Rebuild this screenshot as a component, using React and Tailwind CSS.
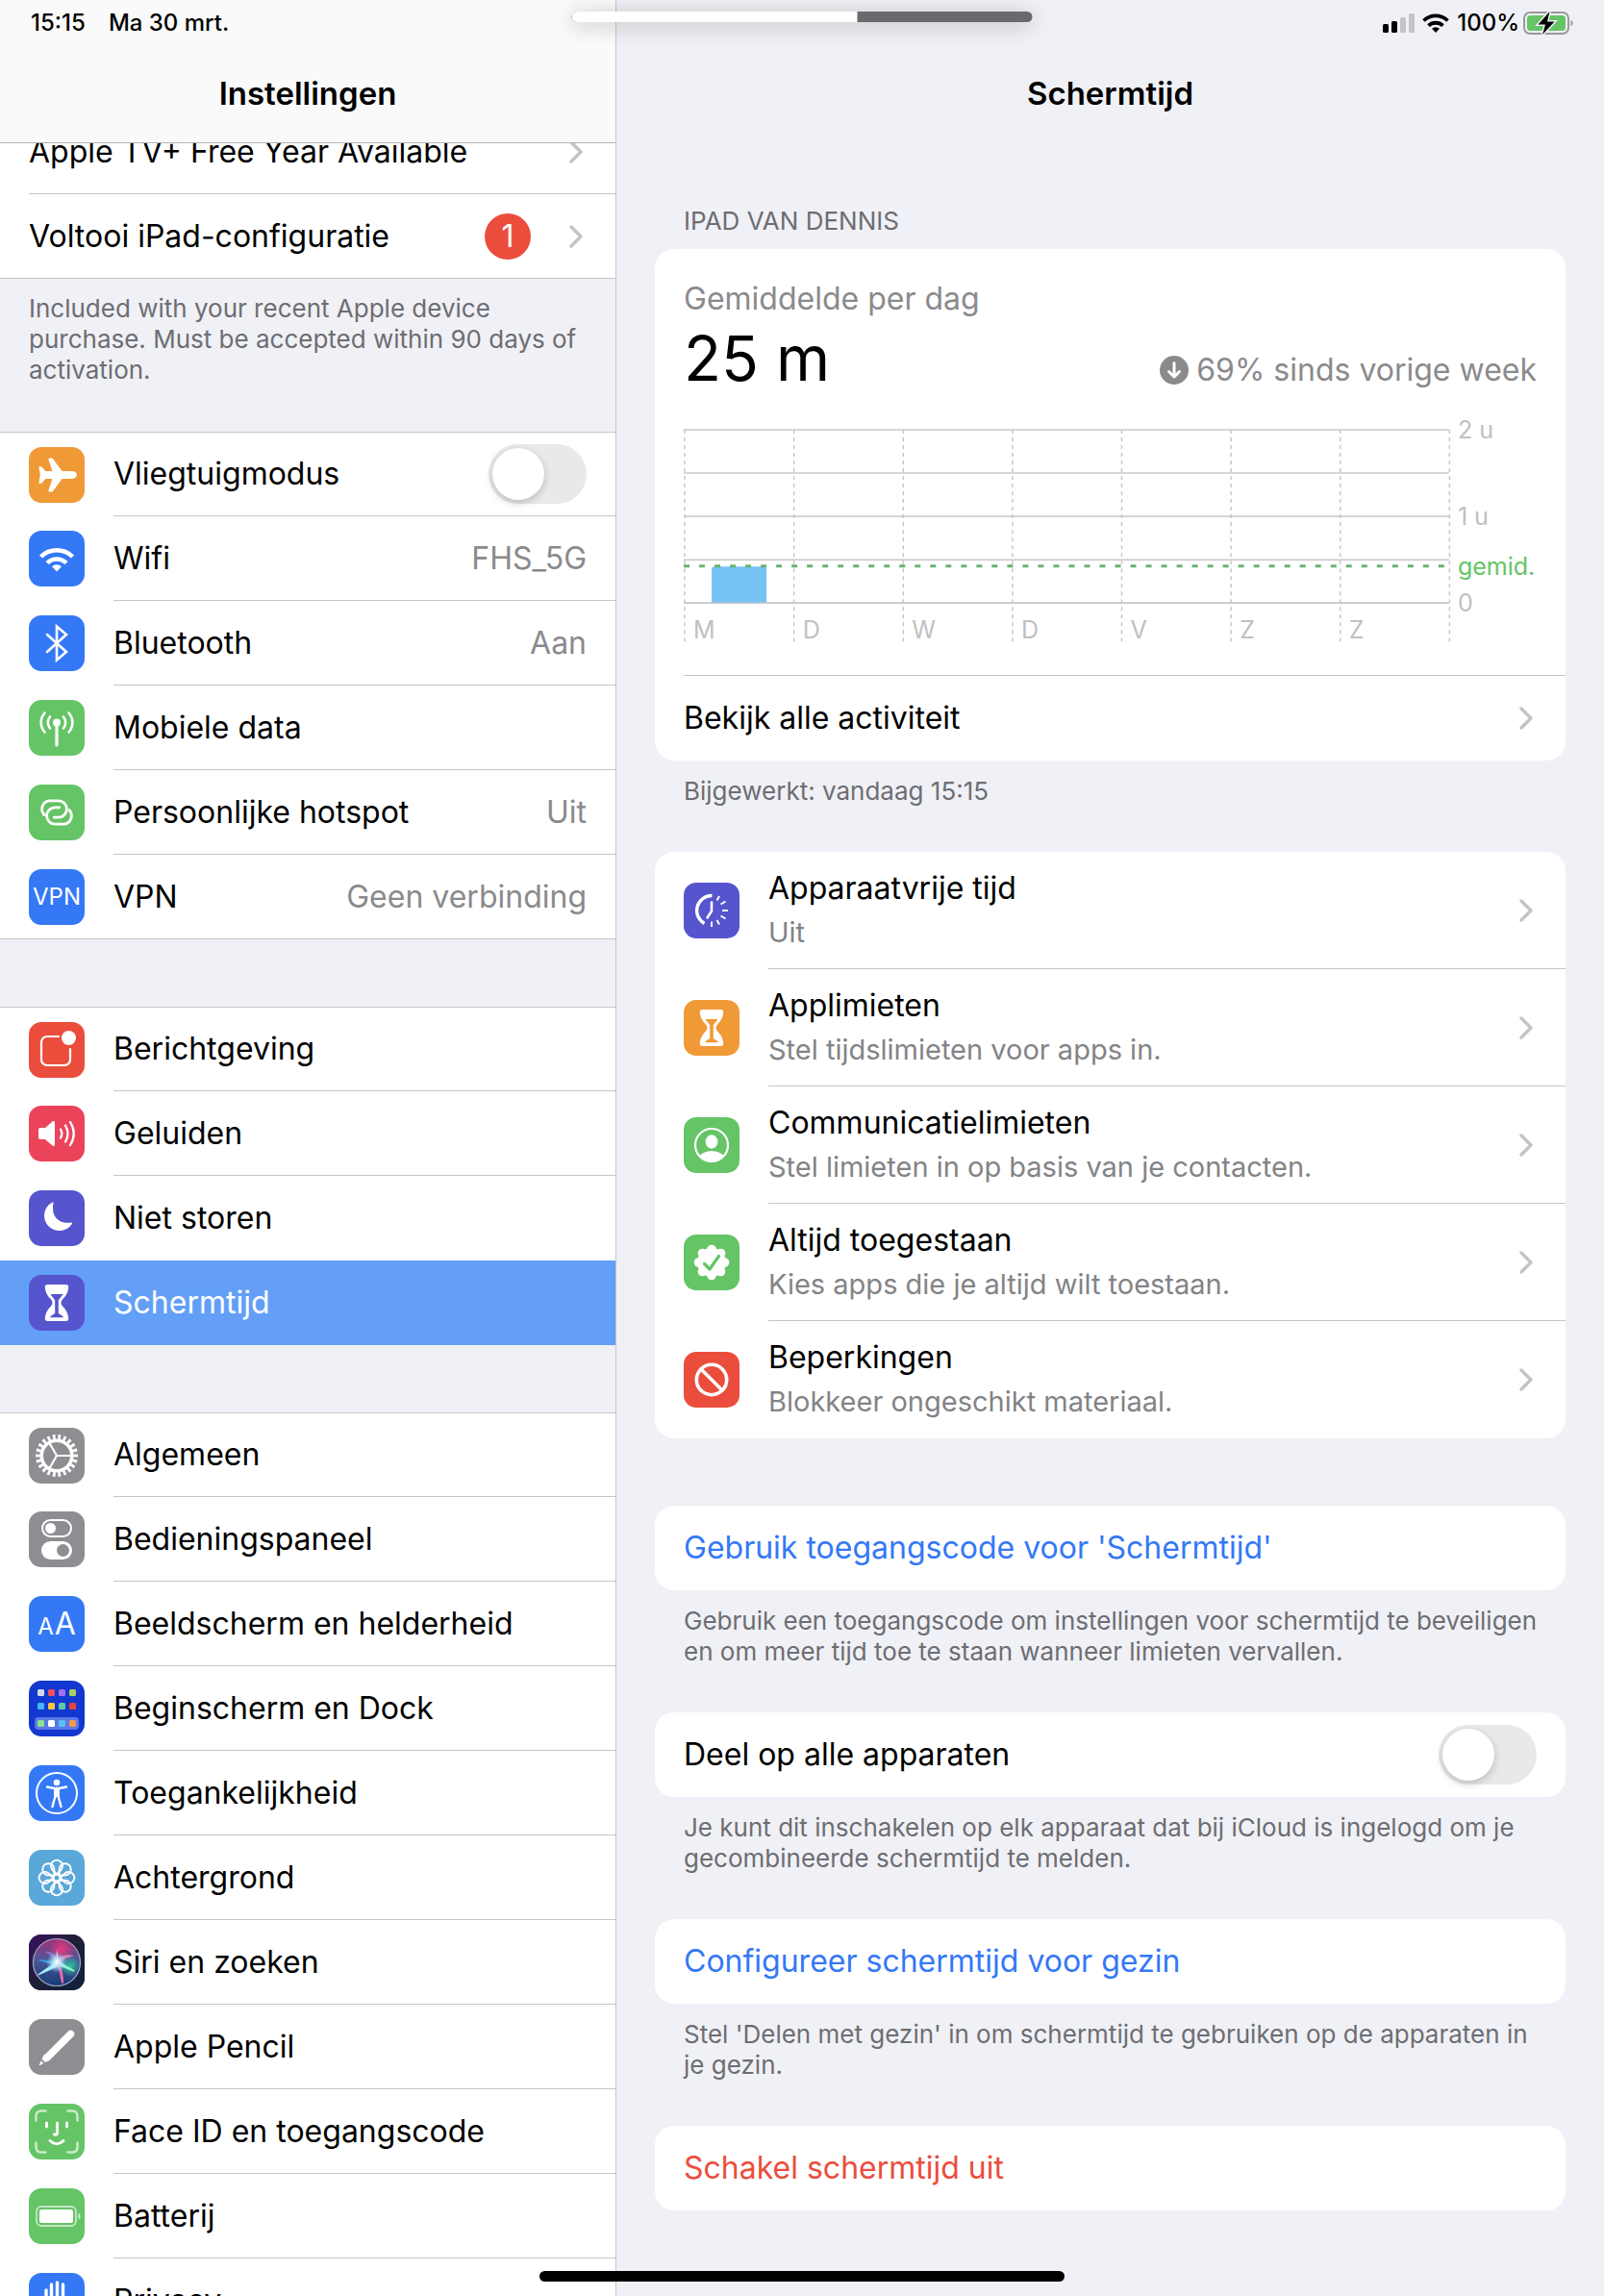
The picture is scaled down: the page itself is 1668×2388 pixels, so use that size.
import { useState } from "react";

const ICON_BG = {
	orange: "bg-[#f09a37]",
	blue: "bg-[#3478f6]",
	green: "bg-[#65c466]",
	red: "bg-[#eb4d3d]",
	pink: "bg-[#eb445a]",
	indigo: "bg-[#5655cd]",
	gray: "bg-[#8e8e92]",
	sky: "bg-[#5aa7da]",
	navy: "bg-[#1238cf]",
	dark: "bg-[#1b1a38]",
};

const Glyph = ({ children }) => (
	<svg
		viewBox="0 0 58 58"
		className="size-[58px]"
		fill="none"
		stroke="white"
		strokeLinecap="round"
		strokeLinejoin="round"
		aria-hidden="true"
	>
		{children}
	</svg>
);

const Hourglass = ({ color }) => (
	<Glyph>
		<path
			d="M19.500 10h19c2 0 3 1 2.700 3c-.6 6.500-3.500 9.500-6.200 12.500c-2 2.300-2 4.700 0 7c2.700 3 5.600 6 6.200 12.500c.3 2-.7 3-2.700 3h-19c-2 0-3-1-2.700-3c.6-6.500 3.500-9.500 6.200-12.500c2-2.300 2-4.700 0-7c-2.700-3-5.600-6-6.200-12.500c-.3-2 .7-3 2.700-3z"
			fill="white"
			stroke="none"
		/>
		<path
			d="M22.500 20h13c-1.300 2.700-3.500 4-4.700 6.500v13.500c2 1.500 4.700 2.200 5.200 4.300h-14c.5-2.100 3.200-2.800 5.200-4.300v-13.500c-1.200-2.500-3.400-3.800-4.700-6.500z"
			fill={color}
			stroke="none"
		/>
	</Glyph>
);

const GLYPHS = {
	airplane: (
		<Glyph>
			<path
				d="M50 29c0 2.400-3 3.900-6 3.900h-9.500l-9 12.300c-.6.900-1.300 1.300-2.300 1.300h-1.800c-.8 0-1.200-.6-.9-1.400l4-12.200h-7.300l-3.300 4c-.5.600-1 .8-1.600.8h-1c-.6 0-1-.4-.8-1l1.300-7.700l-1.300-7.700c-.2-.6.2-1 .8-1h1c.6 0 1.100.2 1.600.8l3.300 4h7.300l-4-12.200c-.3-.8.100-1.400.9-1.400h1.800c1 0 1.700.4 2.300 1.300l9 12.300h9.500c3 0 6 1.500 6 3.900z"
				fill="white"
				stroke="none"
			/>
		</Glyph>
	),
	wifi: (
		<Glyph>
			<g strokeWidth="4.500" strokeLinecap="butt">
				<path d="M12.500 27a23.500 23.500 0 0 1 33 0" />
				<path d="M19 33.500a14.300 14.300 0 0 1 20 0" />
			</g>
			<path
				d="M29 42.500l-5-5.200a7.200 7.200 0 0 1 10 0z"
				fill="white"
				stroke="none"
			/>
		</Glyph>
	),
	bluetooth: (
		<Glyph>
			<path d="M19 20l20 18l-10 8.500v-35l10 8.500l-20 18" strokeWidth="2.600" strokeLinejoin="miter" />
		</Glyph>
	),
	antenna: (
		<Glyph>
			<circle cx="29" cy="23.500" r="4" fill="white" stroke="none" />
			<path d="M29 24v23" strokeWidth="3.200" />
			<g strokeWidth="2.600">
				<path d="M16.500 13.500a15 15 0 0 0 0 20M41.500 13.500a15 15 0 0 1 0 20" />
				<path d="M22 17.500a9.500 9.500 0 0 0 0 12M36 17.500a9.500 9.500 0 0 1 0 12" />
			</g>
		</Glyph>
	),
	hotspot: (
		<Glyph>
			<g strokeWidth="2.800">
				<path d="M16 31.500a8.800 8.800 0 0 1 5.200-14.700h9.500a8.700 8.700 0 0 1 0 17.400h-4.500" />
				<path d="M42 26.500a8.800 8.800 0 0 1-5.200 14.700h-9.500a8.700 8.700 0 0 1 0-17.400h4.500" />
			</g>
		</Glyph>
	),
	vpn: <span className="text-[24px] text-white">VPN</span>,
	notifications: (
		<Glyph>
			<path
				d="M31 15h-12a6 6 0 0 0-6 6v18a6 6 0 0 0 6 6h18a6 6 0 0 0 6-6v-11"
				strokeWidth="2.200"
			/>
			<circle cx="41.500" cy="16.500" r="7.500" fill="white" stroke="none" />
		</Glyph>
	),
	sounds: (
		<Glyph>
			<path
				d="M12 23h5l7.500-6.500c1-.8 2.500-.3 2.500 1v23c0 1.300-1.500 1.800-2.500 1l-7.500-6.500h-5c-1.300 0-2-.7-2-2v-8c0-1.300.7-2 2-2z"
				fill="white"
				stroke="none"
			/>
			<g strokeWidth="2.300">
				<path d="M33 24.500q2.600 4.500 0 9" />
				<path d="M38 20.500q5 8.500 0 17" />
				<path d="M43 17q7.500 12 0 24" />
			</g>
		</Glyph>
	),
	moon: (
		<Glyph>
			<path
				d="M25.500 13c-2.500 14 4.500 22.500 18.800 20.500c.8 0 1 .5.7 1.200a15.700 15.700 0 1 1-20.500-22.300c.7-.3 1.100 0 1 .6z"
				fill="white"
				stroke="none"
			/>
		</Glyph>
	),
	hourglass: <Hourglass color="#5655cd" />,
	hourglassOrange: <Hourglass color="#f09a37" />,
	gear: (
		<Glyph>
			<circle
				cx="29"
				cy="29"
				r="19.500"
				strokeWidth="5"
				strokeLinecap="butt"
				pathLength="44"
				strokeDasharray="1 1"
				strokeDashoffset=".5"
			/>
			<circle cx="29" cy="29" r="15.800" strokeWidth="3.600" />
			<path d="M29 29h15M29 29l-7.500-13M29 29l-7.500 13" strokeWidth="2.200" />
		</Glyph>
	),
	controls: (
		<Glyph>
			<rect x="14" y="9" width="30" height="17" rx="8.500" strokeWidth="2" />
			<circle cx="22.500" cy="17.500" r="5.500" fill="white" stroke="none" />
			<rect x="13" y="31" width="32" height="19" rx="9.500" fill="white" stroke="none" />
			<circle cx="35.500" cy="40.500" r="6.500" fill="#8e8e92" stroke="none" />
		</Glyph>
	),
	textSize: (
		<span className="flex items-baseline gap-px text-white">
			<span className="text-[24px]">A</span>
			<span className="text-[32px]">A</span>
		</span>
	),
	homeScreen: (
		<Glyph>
			<g stroke="none">
				<rect x="6" y="38" width="46" height="13" rx="4" fill="#5b78e6" />
				{[
					["#d5dbe0", "#f04e62", "#a66ff0", "#a9d05a"],
					["#46b5f5", "#fbc23c", "#63c9a0", "#ea4536"],
					["#86e58a", "#ffffff", "#5bc0f3", "#f2994e"],
				].map((row, y) =>
					row.map((fill, x) => (
						<rect
							key={`${y}-${x}`}
							x={9 + x * 11}
							y={[9, 23, 41][y]}
							width="7"
							height="7"
							rx="1.500"
							fill={fill}
						/>
					)),
				)}
			</g>
		</Glyph>
	),
	accessibility: (
		<Glyph>
			<circle cx="29" cy="29" r="21" strokeWidth="2" />
			<circle cx="29" cy="18" r="3.300" fill="white" stroke="none" />
			<path
				d="M19 22.500l7.300 1.500h5.400l7.300-1.500M27.500 24v8l-3 11M30.500 24v8l3 11"
				strokeWidth="2.400"
			/>
			<path d="M26 24h6l-.5 9h-5z" fill="white" stroke="none" />
		</Glyph>
	),
	flower: (
		<Glyph>
			<g strokeWidth="2">
				{[0, 45, 90, 135, 180, 225, 270, 315].map((angle) => (
					<path
						key={angle}
						d="M29 25.500l-5-5.500a6 6 0 1 1 10 0z"
						transform={`rotate(${angle} 29 29)`}
					/>
				))}
				<circle cx="29" cy="29" r="3.500" />
			</g>
		</Glyph>
	),
	siri: (
		<Glyph>
			<defs>
				<linearGradient id="siri-bg" x1="0" y1="0" x2="1" y2="1">
					<stop offset="0" stopColor="#3b1060" />
					<stop offset=".5" stopColor="#1d2036" />
					<stop offset="1" stopColor="#10203f" />
				</linearGradient>
				<linearGradient id="siri-orb" x1=".5" y1="0" x2=".5" y2="1">
					<stop offset="0" stopColor="#a3307a" />
					<stop offset=".45" stopColor="#4a5796" />
					<stop offset="1" stopColor="#173a78" />
				</linearGradient>
				<radialGradient id="siri-pink">
					<stop offset="0" stopColor="#e8397f" />
					<stop offset="1" stopColor="#e8397f" stopOpacity="0" />
				</radialGradient>
				<radialGradient id="siri-green">
					<stop offset="0" stopColor="#2fc79a" />
					<stop offset="1" stopColor="#2fc79a" stopOpacity="0" />
				</radialGradient>
				<radialGradient id="siri-core">
					<stop offset="0" stopColor="#ffffff" />
					<stop offset=".4" stopColor="#bfeaff" stopOpacity=".8" />
					<stop offset="1" stopColor="#7fd0ff" stopOpacity="0" />
				</radialGradient>
			</defs>
			<g stroke="none">
				<rect width="58" height="58" fill="url(#siri-bg)" />
				<circle cx="29" cy="29" r="24.500" fill="url(#siri-orb)" />
				<circle cx="34" cy="16" r="13" fill="url(#siri-pink)" />
				<circle cx="43" cy="33" r="11" fill="url(#siri-green)" />
				<path d="M29 28c-9-1-16-3-20-1c5 1 12 4 20 5z" fill="#3ea8e8" opacity=".8" />
				<path d="M30 26c-3-6-8-9-14-8c6 2 9 6 12 11z" fill="#9a7fe0" opacity=".8" />
				<path d="M28 28c4-6 10-8 20-6c-7 1-13 4-18 9z" fill="#e78fb8" opacity=".8" />
				<path d="M27 29l-17 12c-1 1 0 2 1 1l20-9z" fill="#a9f0ff" />
				<path d="M30 27l17 10c1 .7.500 2-.8 1.600l-18-7z" fill="#8df5cf" />
				<path d="M28 30c4 5 4 12 6 20c.3 1.500 2 1.500 2 0c0-9-2-16-6-22z" fill="#f06ba4" />
				<path d="M28 30l1-15l3 15z" fill="#f4b7dc" />
				<circle cx="29" cy="29" r="11" fill="url(#siri-core)" />
			</g>
			<circle cx="29" cy="29" r="24.500" stroke="#a4aac8" strokeWidth="1.200" />
		</Glyph>
	),
	pencil: (
		<Glyph>
			<path d="M43.500 15.500l-24 24" strokeWidth="7.500" />
			<path d="M16 36.500l6 6l-5 2.500l-3.500-3.500z" fill="white" stroke="none" />
			<path d="M12.500 43.500l3 2.500l-5 2.500z" fill="white" stroke="none" />
		</Glyph>
	),
	faceId: (
		<Glyph>
			<g strokeWidth="2.600" opacity=".65">
				<path d="M7.500 17.500v-5a5 5 0 0 1 5-5h5M40.500 7.500h5a5 5 0 0 1 5 5v5M50.500 40.500v5a5 5 0 0 1-5 5h-5M17.500 50.500h-5a5 5 0 0 1-5-5v-5" />
			</g>
			<g strokeWidth="3">
				<path d="M18.500 20v4M39.500 20v4M29.500 20v10.500q0 1.500-1.500 1.500h-1.500" />
				<path d="M22 38.500q7 6.500 14 0" />
			</g>
		</Glyph>
	),
	battery: (
		<Glyph>
			<rect x="8" y="19" width="41" height="20" rx="5" strokeWidth="1.800" opacity=".6" />
			<rect x="11" y="22" width="35" height="14" rx="2.500" fill="white" stroke="none" />
			<path d="M51.500 25.500q4.500 3.500 0 7z" fill="white" stroke="none" opacity=".7" />
		</Glyph>
	),
	hand: (
		<Glyph>
			<g strokeWidth="3.400">
				<path d="M18 18v20M23.500 12v24M29.500 10v24M35.500 12v24" />
			</g>
			<path d="M16.500 30h21v14h-21z" fill="white" stroke="none" />
		</Glyph>
	),
	downtime: (
		<Glyph>
			<path d="M29.500 13.500a15.500 15.500 0 0 0-8 29" strokeWidth="3.400" strokeLinecap="butt" />
			<path d="M29 20.500v9l-4.500 7" strokeWidth="2.600" />
			<path
				d="M34.500 18.500l2.500-4.500M38.500 22.500l5-3M40 29h6M38.500 34.500l5 3M34.500 39l2.500 4.500M29 40.500v5.500"
				strokeWidth="2"
				strokeLinecap="butt"
			/>
		</Glyph>
	),
	contact: (
		<Glyph>
			<defs>
				<clipPath id="contact-clip">
					<circle cx="29" cy="29" r="17" />
				</clipPath>
			</defs>
			<circle cx="29" cy="29" r="17" strokeWidth="2.200" />
			<ellipse cx="29" cy="25.500" rx="6.400" ry="7.200" fill="white" stroke="none" />
			<ellipse
				cx="29"
				cy="44"
				rx="14"
				ry="9"
				fill="white"
				stroke="none"
				clipPath="url(#contact-clip)"
			/>
		</Glyph>
	),
	allowed: (
		<Glyph>
			<g fill="white" stroke="none">
				<circle cx="29" cy="29" r="15" />
				{[0, 45, 90, 135, 180, 225, 270, 315].map((angle) => (
					<circle
						key={angle}
						cx="29"
						cy="15.500"
						r="4.800"
						transform={`rotate(${angle} 29 29)`}
					/>
				))}
			</g>
			<path d="M21.500 30.500l5.500 5.500l9.500-13.500" stroke="#65c466" strokeWidth="3.200" />
		</Glyph>
	),
	blocked: (
		<Glyph>
			<circle cx="29" cy="29" r="15.700" strokeWidth="3.600" />
			<path d="M18 18l22 22" strokeWidth="3.600" />
		</Glyph>
	),
};

const CONNECTIVITY = [
	{ icon: "airplane", color: "orange", label: "Vliegtuigmodus", toggle: true },
	{ icon: "wifi", color: "blue", label: "Wifi", value: "FHS_5G" },
	{ icon: "bluetooth", color: "blue", label: "Bluetooth", value: "Aan" },
	{ icon: "antenna", color: "green", label: "Mobiele data" },
	{ icon: "hotspot", color: "green", label: "Persoonlijke hotspot", value: "Uit" },
	{ icon: "vpn", color: "blue", label: "VPN", value: "Geen verbinding" },
];

const ATTENTION = [
	{ icon: "notifications", color: "red", label: "Berichtgeving" },
	{ icon: "sounds", color: "pink", label: "Geluiden" },
	{ icon: "moon", color: "indigo", label: "Niet storen", plain: true },
	{ icon: "hourglass", color: "indigo", label: "Schermtijd", active: true },
];

const GENERAL = [
	{ icon: "gear", color: "gray", label: "Algemeen" },
	{ icon: "controls", color: "gray", label: "Bedieningspaneel" },
	{ icon: "textSize", color: "blue", label: "Beeldscherm en helderheid" },
	{ icon: "homeScreen", color: "navy", label: "Beginscherm en Dock" },
	{ icon: "accessibility", color: "blue", label: "Toegankelijkheid" },
	{ icon: "flower", color: "sky", label: "Achtergrond" },
	{ icon: "siri", color: "dark", label: "Siri en zoeken" },
	{ icon: "pencil", color: "gray", label: "Apple Pencil" },
	{ icon: "faceId", color: "green", label: "Face ID en toegangscode" },
	{ icon: "battery", color: "green", label: "Batterij" },
	{ icon: "hand", color: "blue", label: "Privacy" },
];

const LIMITS = [
	{ icon: "downtime", color: "indigo", title: "Apparaatvrije tijd", text: "Uit" },
	{
		icon: "hourglassOrange",
		color: "orange",
		title: "Applimieten",
		text: "Stel tijdslimieten voor apps in.",
	},
	{
		icon: "contact",
		color: "green",
		title: "Communicatielimieten",
		text: "Stel limieten in op basis van je contacten.",
	},
	{
		icon: "allowed",
		color: "green",
		title: "Altijd toegestaan",
		text: "Kies apps die je altijd wilt toestaan.",
	},
	{
		icon: "blocked",
		color: "red",
		title: "Beperkingen",
		text: "Blokkeer ongeschikt materiaal.",
	},
];

const DAYS = ["M", "D", "W", "D", "V", "Z", "Z"];

const AppIcon = ({ name, color }) => (
	<span
		className={`flex size-[58px] shrink-0 items-center justify-center overflow-hidden rounded-[13px] ${ICON_BG[color]}`}
	>
		{GLYPHS[name]}
	</span>
);

const Chevron = () => (
	<svg
		viewBox="0 0 14 24"
		className="h-6 w-3.5 shrink-0"
		fill="none"
		stroke="#c4c4c6"
		strokeWidth="3.500"
		strokeLinecap="round"
		strokeLinejoin="round"
		aria-hidden="true"
	>
		<path d="M2 2l10 10l-10 10" />
	</svg>
);

const Toggle = ({ id }) => {
	const [on, setOn] = useState(false);

	return (
		<input
			id={id}
			type="checkbox"
			role="switch"
			checked={on}
			onChange={() => setOn(!on)}
			className="h-[62px] w-[102px] shrink-0 cursor-pointer appearance-none rounded-full bg-[#e8e9e9] p-1 before:block before:size-[54px] before:rounded-full before:bg-white before:shadow-[0_3px_8px_rgba(0,0,0,0.2)] checked:bg-[#65c466] checked:before:ml-10"
		/>
	);
};

const SidebarRow = ({ icon, color, label, value, toggle, active, plain }) => {
	const Tag = toggle ? "label" : "a";

	return (
		<li
			className={`group last:border-b ${
				active ? "border-[#639ff7]" : "border-[#c6c6c9]"
			}`}
		>
			<Tag
				href={toggle ? undefined : "#"}
				htmlFor={toggle ? icon : undefined}
				aria-current={active ? "page" : undefined}
				className={`flex h-[88px] items-center gap-[30px] pl-[30px] group-first:h-[87px] group-last:h-[87px] ${
					active ? "bg-[#639ff7] text-white" : "bg-white text-black"
				}`}
			>
				<AppIcon name={icon} color={color} />
				<span
					className={`flex h-full flex-1 items-center justify-between border-[#c6c6c9] pr-[30px] group-last:border-b-0 ${
						plain ? "" : "border-b"
					}`}
				>
					<span>{label}</span>
					{value && <span className="text-[#8a8a8d]">{value}</span>}
					{toggle && <Toggle id={icon} />}
				</span>
			</Tag>
		</li>
	);
};

const SidebarGroup = ({ rows }) => (
	<ul className="border-t border-[#c6c6c9] bg-white">
		{rows.map((row) => (
			<SidebarRow key={row.label} {...row} />
		))}
	</ul>
);

const Sidebar = () => (
	<aside className="flex w-[641px] shrink-0 flex-col overflow-hidden border-r border-[#c6c6c9]">
		<header className="z-10 shrink-0 border-b border-[#b2b2b4] bg-[#f9faf9]">
			<div className="flex h-12 items-center gap-6 pl-8 text-[24px] font-medium">
				<time>15:15</time>
				<span>Ma 30 mrt.</span>
			</div>
			<h1 className="flex h-[100px] items-center justify-center text-[33px] font-semibold">
				Instellingen
			</h1>
		</header>

		{/* List is scrolled a little, so the first row sits under the header */}
		<nav className="-mt-9 shrink-0">
			<ul className="border-y border-[#c6c6c9] bg-white">
				<li className="pl-[30px]">
					<a
						href="#"
						className="flex h-[88px] items-center justify-between border-b border-[#c6c6c9] pr-[34px]"
					>
						Apple TV+ Free Year Available
						<Chevron />
					</a>
				</li>
				<li className="pl-[30px]">
					<a href="#" className="flex h-[87px] items-center gap-10 pr-[34px]">
						<span className="flex-1">Voltooi iPad-configuratie</span>
						<span className="flex size-12 items-center justify-center rounded-full bg-[#eb4d3d] text-white">
							1
						</span>
						<Chevron />
					</a>
				</li>
			</ul>
			<p className="px-[30px] pt-[15px] pb-12 text-[26px] leading-8 text-[#6d6d72]">
				Included with your recent Apple device purchase. Must be accepted
				within 90 days of activation.
			</p>
			<div className="flex flex-col gap-[70px]">
				<SidebarGroup rows={CONNECTIVITY} />
				<SidebarGroup rows={ATTENTION} />
				<SidebarGroup rows={GENERAL} />
			</div>
		</nav>
	</aside>
);

const StatusIcons = () => (
	<div className="flex h-12 items-center justify-end gap-2 pr-[30px] text-[24px] font-medium">
		<svg viewBox="0 0 33 20" className="h-5 w-[33px]" aria-label="Signaal">
			<rect x="0" y="11" width="6" height="9" rx="1.500" />
			<rect x="9" y="8" width="6" height="12" rx="1.500" />
			<rect x="18" y="4" width="6" height="16" rx="1.500" fill="#c3c4c8" />
			<rect x="27" y="0" width="6" height="20" rx="1.500" fill="#c3c4c8" />
		</svg>
		<svg
			viewBox="0 0 28 20"
			className="h-5 w-7"
			fill="none"
			stroke="black"
			strokeWidth="3.800"
			aria-label="Wifi"
		>
			<path d="M1.500 7.500a18 18 0 0 1 25 0" />
			<path d="M6.500 12.700a11 11 0 0 1 15 0" />
			<path d="M14 20l-4-4.200a6 6 0 0 1 8 0z" fill="black" stroke="none" />
		</svg>
		<div className="flex items-center gap-1">
			<span>100%</span>
			<svg viewBox="0 0 54 26" className="h-[26px] w-[54px]" aria-label="Batterij">
				<rect x="1" y="2" width="46" height="22" rx="6" fill="#f0f1f6" stroke="#98989d" strokeWidth="2" />
				<rect x="4" y="5" width="40" height="16" rx="3.500" fill="#65c466" />
				<path d="M49.500 9.500q4.500 3.500 0 7z" fill="#98989d" />
				<path
					d="M27.500 1l-12 13.500h7.500l-3 10.500l12.500-13.500h-7.500z"
					stroke="#f0f1f6"
					strokeWidth="3"
					paintOrder="stroke"
				/>
			</svg>
		</div>
	</div>
);

const Card = ({ children }) => (
	<div className="overflow-hidden rounded-[20px] bg-white">{children}</div>
);

const Note = ({ children }) => (
	<p className="pt-4 pr-5 pb-[47px] pl-[30px] text-[26px] leading-8 text-[#6d6d72]">
		{children}
	</p>
);

const UsageChart = () => (
	<svg
		viewBox="0 0 886 272"
		className="mt-[17px] block w-full"
		role="img"
		aria-label="Schermtijd per dag"
		fontSize="25"
		fill="#c0c0c2"
	>
		<g stroke="#c8c8ca" strokeWidth="1.500">
			{[17, 62, 107, 152, 197].map((y) => (
				<path key={y} d={`M0 ${y}h795`} />
			))}
			{[0, 1, 2, 3, 4, 5, 6, 7].map((i) => (
				<path
					key={i}
					d={`M${1 + i * 113.5} 17v222`}
					strokeDasharray="4 4"
				/>
			))}
		</g>
		<path d="M29 197v-35q0-3 3-3h51q3 0 3 3v35z" fill="#76c2f5" />
		<path d="M0 197h795" stroke="#c8c8ca" strokeWidth="1.500" />
		<path d="M0 158.500h795" stroke="#69b36f" strokeWidth="3" strokeDasharray="6 10" />
		{DAYS.map((day, i) => (
			<text key={i} x={10 + i * 113.5} y="234">
				{day}
			</text>
		))}
		<text x="804" y="26">2 u</text>
		<text x="804" y="116">1 u</text>
		<text x="804" y="168" fill="#65c466">gemid.</text>
		<text x="804" y="206">0</text>
	</svg>
);

const ScreenTime = () => (
	<main className="flex min-w-0 flex-1 flex-col">
		<header className="shrink-0">
			<StatusIcons />
			<h2 className="flex h-[100px] items-center justify-center text-[33px] font-semibold">
				Schermtijd
			</h2>
		</header>

		<div className="px-10 pt-[66px]">
			<h3 className="px-[30px] pb-[13px] text-[26px] leading-8 text-[#6d6d72] uppercase">
				iPad van Dennis
			</h3>
			<Card>
				<div className="px-[30px] pt-8">
					<p className="leading-10 text-[#8a8a8d]">Gemiddelde per dag</p>
					<div className="mt-0.5 flex h-20 items-baseline justify-between">
						<span className="text-[64px] leading-[80px]">25 m</span>
						<span className="flex items-baseline gap-2 text-[#8a8a8d]">
							<svg
								viewBox="0 0 30 30"
								className="size-[30px] self-center"
								fill="none"
								aria-hidden="true"
							>
								<circle cx="15" cy="15" r="15" fill="#8a8a8d" />
								<path
									d="M15 7.500v14M9.500 16.500l5.500 5.500l5.500-5.500"
									stroke="white"
									strokeWidth="3"
									strokeLinecap="round"
									strokeLinejoin="round"
								/>
							</svg>
							<span>69% sinds vorige week</span>
						</span>
					</div>
					<UsageChart />
				</div>
				<a
					href="#"
					className="ml-[30px] flex h-[89px] items-center justify-between border-t border-[#c6c6c9] pr-[34px]"
				>
					Bekijk alle activiteit
					<Chevron />
				</a>
			</Card>
			<Note>Bijgewerkt: vandaag 15:15</Note>

			<Card>
				<ul>
					{LIMITS.map((item) => (
						<li key={item.title} className="group">
							<a href="#" className="flex h-[122px] items-center gap-[30px] pl-[30px]">
								<AppIcon name={item.icon} color={item.color} />
								<span className="flex h-full flex-1 items-center justify-between border-b border-[#c6c6c9] pr-[34px] group-last:border-b-0">
									<span className="flex flex-col gap-1.5">
										<span className="leading-10">{item.title}</span>
										<span className="text-[29px] leading-10 text-[#838386]">
											{item.text}
										</span>
									</span>
									<Chevron />
								</span>
							</a>
						</li>
					))}
				</ul>
			</Card>

			<div className="pt-[70px]">
				<Card>
					<button
						type="button"
						className="flex h-[88px] w-full cursor-pointer items-center px-[30px] text-[#3478f6]"
					>
						Gebruik toegangscode voor 'Schermtijd'
					</button>
				</Card>
				<Note>
					Gebruik een toegangscode om instellingen voor schermtijd te
					beveiligen en om meer tijd toe te staan wanneer limieten vervallen.
				</Note>

				<Card>
					<label
						htmlFor="share"
						className="flex h-[88px] items-center justify-between px-[30px]"
					>
						Deel op alle apparaten
						<Toggle id="share" />
					</label>
				</Card>
				<Note>
					Je kunt dit inschakelen op elk apparaat dat bij iCloud is ingelogd
					om je gecombineerde schermtijd te melden.
				</Note>

				<Card>
					<button
						type="button"
						className="flex h-[88px] w-full cursor-pointer items-center px-[30px] text-[#3478f6]"
					>
						Configureer schermtijd voor gezin
					</button>
				</Card>
				<Note>
					Stel 'Delen met gezin' in om schermtijd te gebruiken op de
					apparaten in je gezin.
				</Note>

				<Card>
					<button
						type="button"
						className="flex h-[88px] w-full cursor-pointer items-center px-[30px] text-[#eb4d3d]"
					>
						Schakel schermtijd uit
					</button>
				</Card>
			</div>
		</div>
	</main>
);

const App = () => {
	return (
		<div className="relative flex h-screen overflow-hidden bg-[#f0f1f6] font-[Inter,'Liberation_Sans',sans-serif] text-[32px] text-black">
			<Sidebar />
			<ScreenTime />

			{/* Volume indicator */}
			<div
				className="absolute top-3 left-1/2 z-20 flex h-[11px] w-[479px] -translate-x-1/2 overflow-hidden rounded-full bg-[#6a6a6e] shadow-[0_3px_22px_rgba(0,0,0,0.25)]"
				role="progressbar"
				aria-label="Volume"
				aria-valuenow={62}
			>
				<div className="w-[62%] bg-white" />
			</div>

			{/* Home indicator */}
			<div className="absolute bottom-[15px] left-1/2 z-20 h-[11px] w-[546px] -translate-x-1/2 rounded-full bg-black" />
		</div>
	);
};

export default App;
